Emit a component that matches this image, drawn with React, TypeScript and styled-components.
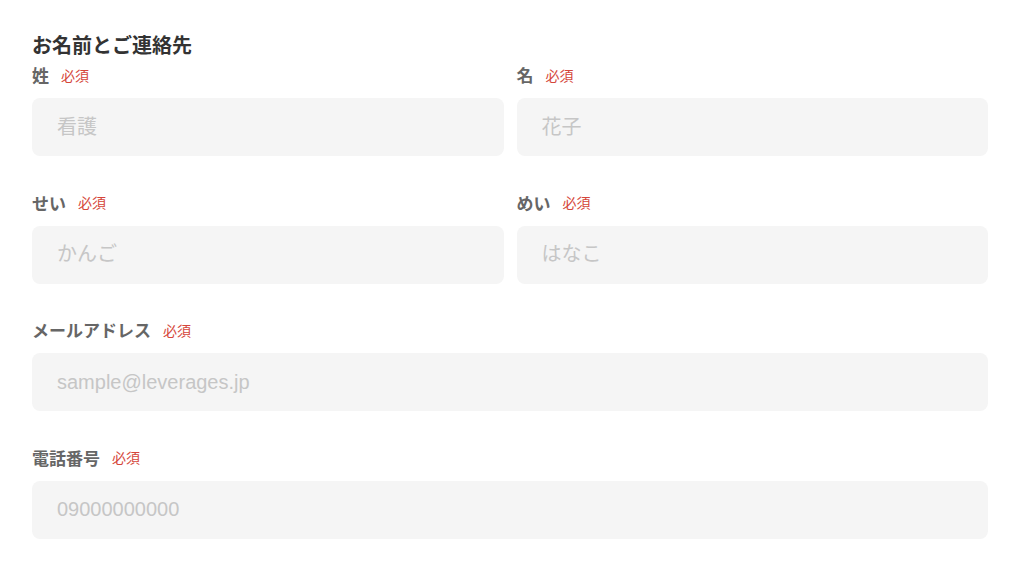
import React from "react";
import styled, { createGlobalStyle } from "styled-components";

const GlobalStyle = createGlobalStyle`
  html, body {
    margin: 0;
    padding: 0;
    background: #ffffff;
    font-family: "Liberation Sans", "Noto Sans CJK JP", sans-serif;
  }
  * { box-sizing: border-box; }
`;

const Page = styled.div`
  width: 1024px;
  padding: 33px 36px 0 32px;
`;

const Title = styled.h2`
  margin: 0 0 8px;
  font-size: 20px;
  line-height: 26px;
  font-weight: 700;
  color: #333333;
`;

const Row = styled.div<{ $cols: number }>`
  display: grid;
  grid-template-columns: repeat(${(p) => p.$cols}, 1fr);
  column-gap: 13px;
  margin-bottom: 38.67px;
`;

const Field = styled.div`
  display: flex;
  flex-direction: column;
`;

const LabelLine = styled.label`
  display: flex;
  align-items: center;
  gap: 12px;
  height: 15px;
  margin-bottom: 16px;
`;

const LabelText = styled.span`
  font-size: 17px;
  font-weight: 700;
  color: #666666;
`;

const Required = styled.span`
  font-size: 14px;
  font-weight: 400;
  color: #d5463a;
`;

const Input = styled.input`
  width: 100%;
  height: 58px;
  border: none;
  outline: none;
  border-radius: 8px;
  background: #f5f5f5;
  padding: 0 25px;
  font-family: "Liberation Sans", "Noto Sans CJK JP", sans-serif;
  font-size: 20px;
  color: #333333;
  &::placeholder {
    color: #c6c6c6;
  }
`;

type F = { label: string; placeholder: string; type?: string };

const FormField = ({ label, placeholder, type }: F) => (
  <Field>
    <LabelLine>
      <LabelText>{label}</LabelText>
      <Required>必須</Required>
    </LabelLine>
    <Input type={type ?? "text"} placeholder={placeholder} />
  </Field>
);

const rows: F[][] = [
  [
    { label: "姓", placeholder: "看護" },
    { label: "名", placeholder: "花子" },
  ],
  [
    { label: "せい", placeholder: "かんご" },
    { label: "めい", placeholder: "はなこ" },
  ],
  [{ label: "メールアドレス", placeholder: "sample@leverages.jp", type: "email" }],
  [{ label: "電話番号", placeholder: "09000000000", type: "tel" }],
];

export default function App() {
  return (
    <>
      <GlobalStyle />
      <Page>
        <Title>お名前とご連絡先</Title>
        {rows.map((r, i) => (
          <Row key={i} $cols={r.length}>
            {r.map((f) => (
              <FormField key={f.label} {...f} />
            ))}
          </Row>
        ))}
      </Page>
    </>
  );
}
